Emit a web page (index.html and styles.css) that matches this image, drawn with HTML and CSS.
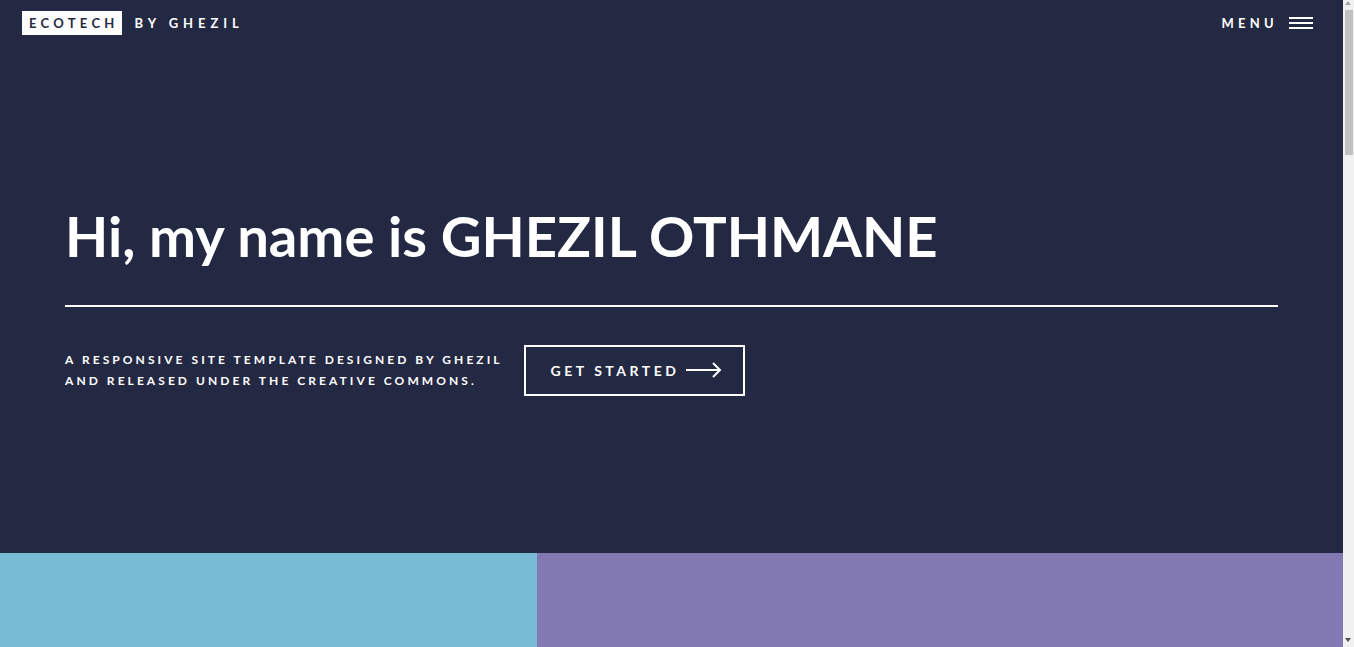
FILE: index.html
```html
<!DOCTYPE html>
<html lang="en">
<head>
<meta charset="utf-8">
<title>Ecotech by Ghezil</title>
<link rel="stylesheet" href="styles.css">
</head>
<body>
<div class="page">
  <header class="header">
    <a class="logo" href="#"><strong class="logo-box">ECOTECH</strong><span class="logo-by">BY GHEZIL</span></a>
    <a class="menu" href="#"><span class="menu-label">MENU</span><span class="burger"><i></i><i></i><i></i></span></a>
  </header>
  <section class="banner">
    <div class="inner">
      <h1 class="title">Hi, my name is GHEZIL OTHMANE</h1>
      <div class="content">
        <p class="lead">A responsive site template designed by GHEZIL<br>and released under the Creative Commons.</p>
        <a class="button" href="#">Get Started
          <svg class="arrow" width="36" height="16" viewBox="0 0 36 16"><path d="M0 8H34M27 1L34 8L27 15" fill="none" stroke="#fff" stroke-width="2"/></svg>
        </a>
      </div>
    </div>
  </section>
  <section class="tiles">
    <article class="tile tile-a"></article>
    <article class="tile tile-b"></article>
  </section>
</div>
<div class="scrollbar" aria-hidden="true">
  <span class="sb-up"></span>
  <span class="sb-thumb"></span>
  <span class="sb-track"></span>
  <span class="sb-down"></span>
</div>
</body>
</html>
```
FILE: styles.css
```css
html, body { margin: 0; padding: 0; }
body {
  background: #242943;
  color: #fff;
  font-family: "Lato", "Liberation Sans", sans-serif;
  display: flex;
  align-items: flex-start;
  height: 647px;
  overflow: hidden;
}
a { color: inherit; text-decoration: none; }
.page { flex: 1; min-width: 0; }
.header {
  height: 46px;
  display: flex;
  align-items: center;
  justify-content: space-between;
  padding: 0 30px 0 22px;
}
.logo { display: flex; align-items: center; font-size: 13px; font-weight: 700; letter-spacing: 0.38em; }
.logo-box {
  background: #fff;
  color: #242943;
  padding: 0 3px 0 7px;
  height: 24px;
  line-height: 24px;
  display: inline-block;
  font-weight: 700;
  letter-spacing: 0.33em;
  margin-right: 13px;
}
.menu { display: flex; align-items: center; font-size: 13px; font-weight: 700; letter-spacing: 0.33em; }
.menu-label { margin-right: 11px; }
.burger { display: flex; flex-direction: column; gap: 3px; width: 24px; }
.burger i { display: block; height: 2px; background: #fff; }
.banner { height: 507px; display: flex; align-items: center; }
.inner { flex: 1; padding: 0 65px; margin-top: 2px; }
.title {
  margin: 0;
  font-size: 56.2px;
  font-weight: 700;
  line-height: 1.1;
  padding-bottom: 38px;
  border-bottom: 2px solid #fff;
}
.content { display: flex; align-items: center; margin-top: 38px; gap: 21px; }
.lead {
  margin: 0;
  font-size: 12px;
  font-weight: 700;
  text-transform: uppercase;
  letter-spacing: 0.255em;
  line-height: 21px;
}
.button {
  display: inline-flex;
  align-items: center;
  gap: 7px;
  height: 51px;
  box-sizing: border-box;
  border: 2px solid #fff;
  padding: 0 21px 0 25px;
  font-size: 14px;
  font-weight: 700;
  text-transform: uppercase;
  letter-spacing: 0.25em;
}
.tiles { display: flex; }
.tile { height: 94px; }
.tile-a { width: 40%; background: #77bbd5; }
.tile-b { width: 60%; background: #8279b3; }
.scrollbar {
  width: 11px;
  height: 647px;
  background: #f1f1f1;
  display: flex;
  flex-direction: column;
  align-items: center;
  flex-shrink: 0;
}
.sb-up, .sb-down { height: 10px; width: 11px; position: relative; }
.sb-up::before, .sb-down::before {
  content: "";
  position: absolute;
  left: 2px;
  border-left: 3.5px solid transparent;
  border-right: 3.5px solid transparent;
}
.sb-up::before { top: 1px; border-bottom: 4px solid #a3a3a3; }
.sb-down::before { bottom: 5px; border-top: 4px solid #505050; }
.sb-thumb { width: 8px; height: 145px; background: #c1c1c1; margin-left: 1px; }
.sb-track { flex: 1; }
```
